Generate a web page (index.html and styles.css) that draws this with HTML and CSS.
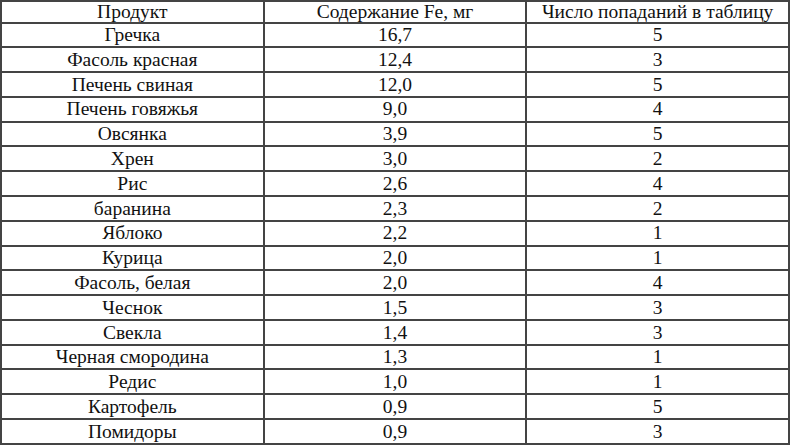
FILE: index.html
```html
<!DOCTYPE html>
<html lang="ru">
<head>
<meta charset="utf-8">
<title>Содержание железа</title>
<link rel="stylesheet" href="styles.css">
</head>
<body>
<table class="fe-table">
  <colgroup><col class="c"><col class="c"><col class="c"></colgroup>
  <thead>
    <tr><th>Продукт</th><th>Содержание Fe, мг</th><th>Число попаданий в таблицу</th></tr>
  </thead>
  <tbody>
    <tr><td>Гречка</td><td>16,7</td><td>5</td></tr>
    <tr><td>Фасоль красная</td><td>12,4</td><td>3</td></tr>
    <tr><td>Печень свиная</td><td>12,0</td><td>5</td></tr>
    <tr><td>Печень говяжья</td><td>9,0</td><td>4</td></tr>
    <tr><td>Овсянка</td><td>3,9</td><td>5</td></tr>
    <tr><td>Хрен</td><td>3,0</td><td>2</td></tr>
    <tr><td>Рис</td><td>2,6</td><td>4</td></tr>
    <tr><td>баранина</td><td>2,3</td><td>2</td></tr>
    <tr><td>Яблоко</td><td>2,2</td><td>1</td></tr>
    <tr><td>Курица</td><td>2,0</td><td>1</td></tr>
    <tr><td>Фасоль, белая</td><td>2,0</td><td>4</td></tr>
    <tr><td>Чеснок</td><td>1,5</td><td>3</td></tr>
    <tr><td>Свекла</td><td>1,4</td><td>3</td></tr>
    <tr><td>Черная смородина</td><td>1,3</td><td>1</td></tr>
    <tr><td>Редис</td><td>1,0</td><td>1</td></tr>
    <tr><td>Картофель</td><td>0,9</td><td>5</td></tr>
    <tr><td>Помидоры</td><td>0,9</td><td>3</td></tr>
  </tbody>
</table>
</body>
</html>
```

FILE: styles.css
```css
html, body {
  margin: 0;
  padding: 0;
  background: #fff;
}
.fe-table {
  width: 790px;
  height: 445px;
  border-collapse: collapse;
  table-layout: fixed;
  font-family: "Liberation Serif", "Times New Roman", serif;
  font-size: 19.5px;
  color: #111;
}
.fe-table th,
.fe-table td {
  border: 2px solid #444;
  padding: 0;
  text-align: center;
  vertical-align: middle;
  font-weight: normal;
  line-height: 1;
}
```
